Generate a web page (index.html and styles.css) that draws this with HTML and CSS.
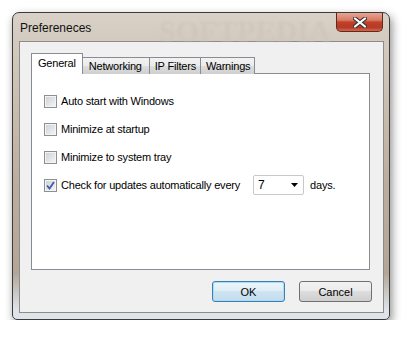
FILE: index.html
```html
<!DOCTYPE html>
<html lang="en">
<head>
    <meta charset="UTF-8">
    <title>Prefereneces</title>
    <link rel="stylesheet" href="styles.css">
</head>
<body>
    <div class="window">
        <div class="titlebar">
            <span class="title">Prefereneces</span>
            <span class="mark">SOFTPEDIA</span>
            <button class="close">
                <svg width="14" height="11" viewBox="0 0 14 11"><path d="M2 1.5 L12 9.5 M12 1.5 L2 9.5" stroke="#3a3a3a" stroke-width="4.2" stroke-linecap="round"/><path d="M2 1.5 L12 9.5 M12 1.5 L2 9.5" stroke="#fff" stroke-width="2.2" stroke-linecap="round"/></svg>
            </button>
        </div>
        <div class="client">
            <div class="tabs">
                <div class="tab active">General</div>
                <div class="tab">Networking</div>
                <div class="tab">IP Filters</div>
                <div class="tab">Warnings</div>
            </div>
            <div class="panel">
                <label class="row"><span class="cb"></span>Auto start with Windows</label>
                <label class="row"><span class="cb"></span>Minimize at startup</label>
                <label class="row"><span class="cb"></span>Minimize to system tray</label>
                <label class="row">
                    <span class="cb checked"><svg width="9" height="9" viewBox="0 0 9 9"><path d="M1 4.5 L3.5 7.5 L8 1" fill="none" stroke="#3a5dab" stroke-width="1.8"/></svg></span>
                    Check for updates automatically every
                    <span class="combo"><span>7</span><svg width="7" height="4" viewBox="0 0 7 4"><path d="M0 0 H7 L3.5 4 Z" fill="#000"/></svg></span>
                    <span class="unit">days.</span>
                </label>
            </div>
            <div class="buttons">
                <button class="btn default">OK</button>
                <button class="btn">Cancel</button>
            </div>
        </div>
    </div>
</body>
</html>
```

FILE: styles.css
```css
body { margin: 0; background: #fff; font-family: "Liberation Sans", Arial, sans-serif; font-size: 11px; letter-spacing: -0.2px; color: #000; }
.window { position: relative; margin: 12px 0 0 12px; width: 365px; height: 300px; padding: 0 5px 6px 6px; border: 1px solid #3b3b3b; border-radius: 7px 7px 5px 5px;
    background: linear-gradient(to bottom, #d9d1c7 0%, #d2c8bc 12%, #bcae9f 55%, #b3a697 85%, #dfe4ea 97%);
    box-shadow: 2px 4px 10px rgba(0,0,0,0.45); }
.titlebar { position: relative; display: flex; align-items: flex-start; height: 28px; }
.title { padding: 8px 0 0 1px; font-size: 12px; letter-spacing: 0; color: #111; }
.mark { position: absolute; left: 140px; top: 1px; font: bold 30px "Liberation Serif", serif; letter-spacing: 0; color: rgba(205,198,190,0.9); filter: blur(1.2px); }
.close { margin-left: auto; margin-right: 1px; width: 47px; height: 19px; border: 1px solid #5b2a22; border-top: none; border-radius: 0 0 5px 5px; padding: 0;
    position: relative; display: flex; align-items: center; justify-content: center;
    background: linear-gradient(to bottom, #e7a594 0%, #d97a64 40%, #c2412a 50%, #b73a24 80%, #d7674e 100%); }
.client { box-sizing: border-box; height: 272px; background: #f0f0f0; border: 1px solid #8c8c8c; padding: 11px 0 0 11px; }
.tabs { display: flex; align-items: flex-end; height: 21px; position: relative; z-index: 1; }
.tab { height: 16px; margin-left: -1px; padding: 0 4px 0 5px; line-height: 16px; border: 1px solid #898c95; border-bottom: none;
    background: linear-gradient(to bottom, #f2f2f2, #ebebeb 50%, #dddddd 51%, #cfcfcf); }
.tab:first-child { margin-left: 0; }
.tab.active { height: 20px; line-height: 19px; padding: 0 6px; background: #fff; margin-right: -1px; position: relative; z-index: 2; }
.tab.active + .tab { margin-left: 0; padding: 0 7px 0 6px; }
.panel { width: 339px; height: 197px; margin-top: -1px; background: #fff; border: 1px solid #898c95; padding-top: 13px; box-sizing: border-box; }
.row { display: flex; align-items: center; height: 28px; padding-left: 12px; }
.cb { width: 11px; height: 11px; margin-right: 4px; border: 1px solid #8e8f8f; display: flex; align-items: center; justify-content: center;
    background: linear-gradient(135deg, #cbcfd5, #f6f6f6); box-shadow: inset 0 0 0 1px #f4f4f4; }
.combo { display: flex; align-items: center; justify-content: space-between; width: 40px; height: 18px; margin-left: 13px; padding: 0 5px 0 4px;
    border: 1px solid #c5c8cc; border-radius: 2px; background: #fff; font-size: 12px; }
.unit { margin-left: 6px; }
.buttons { display: flex; gap: 14px; padding: 11px 0 0 181px; }
.btn { width: 73px; height: 21px; padding: 0; font: 11px "Liberation Sans", Arial, sans-serif; color: #000; border: 1px solid #707070; border-radius: 3px;
    background: linear-gradient(to bottom, #f2f2f2, #ebebeb 45%, #dddddd 50%, #cfcfcf); }
.btn.default { border-color: #3c7fb1; box-shadow: inset 0 0 0 1px #a8dcf7;
    background: linear-gradient(to bottom, #edf5fa, #e0eef7 45%, #cee4f2 50%, #c2dcee); }
```
